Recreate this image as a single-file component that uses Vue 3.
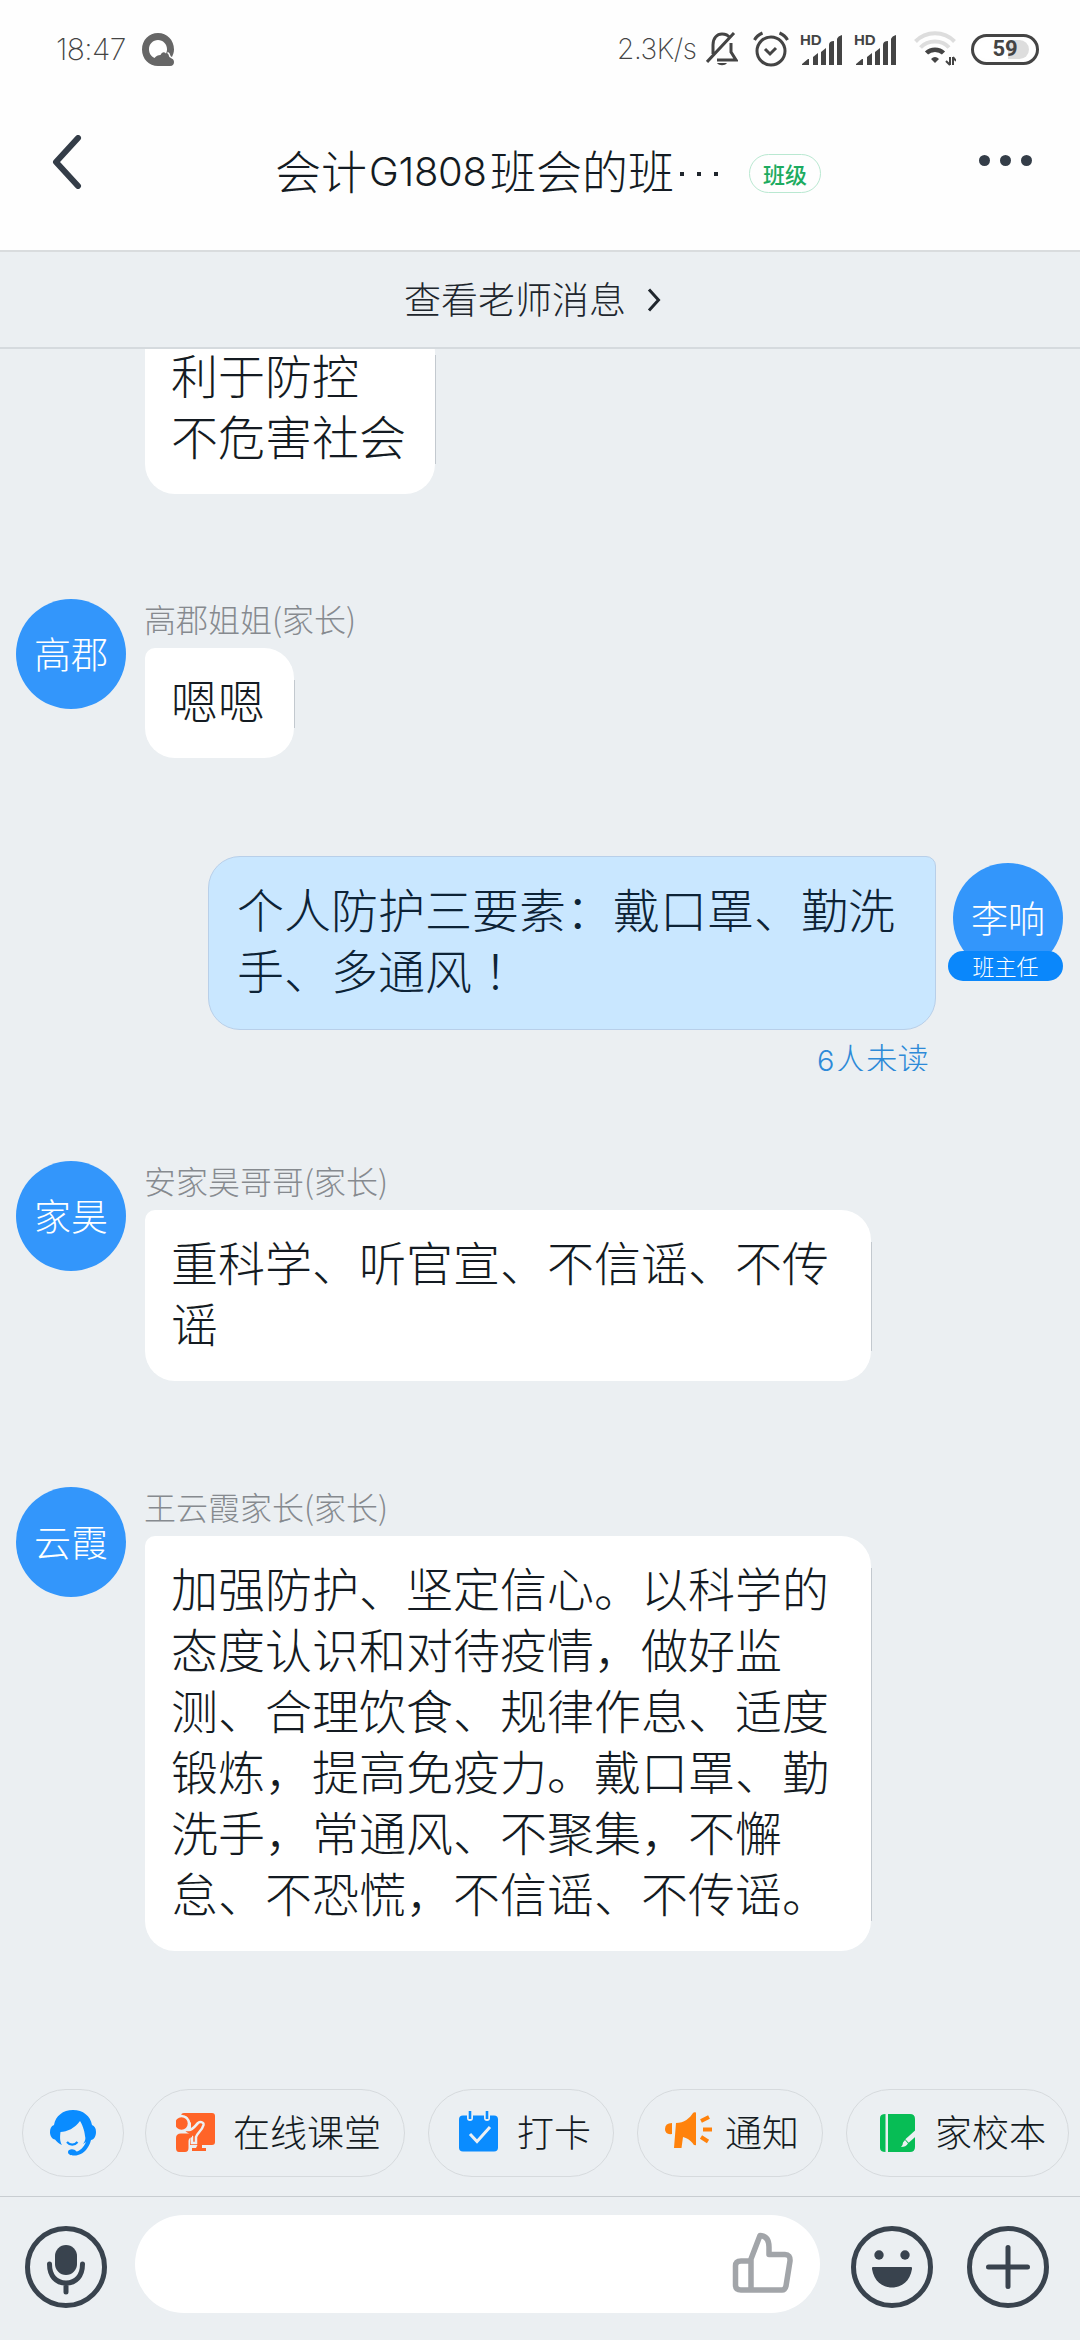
<script setup>
const messages = [
  { id: 1, cls: 'first', lines: ['利于防控', '不危害社会'] },
  { id: 2, cls: 'second', avatar: '高郡', name: '高郡姐姐(家长)', lines: ['嗯嗯'] },
  { id: 3, mine: true },
  { id: 4, cls: 'fourth', wide: true, avatar: '家昊', name: '安家昊哥哥(家长)', lines: ['重科学、听官宣、不信谣、不传', '谣'] },
  {
    id: 5,
    cls: 'fifth',
    wide: true,
    avatar: '云霞',
    name: '王云霞家长(家长)',
    lines: [
      '加强防护、坚定信心。以科学的',
      '态度认识和对待疫情，做好监',
      '测、合理饮食、规律作息、适度',
      '锻炼，提高免疫力。戴口罩、勤',
      '洗手，常通风、不聚集，不懈',
      '怠、不恐慌，不信谣、不传谣。',
    ],
  },
]
</script>

<template>
  <div class="screen">
    <div class="status">
      <span class="clock">18:47</span>
      <svg class="q" width="32" height="33" viewBox="0 0 32 33">
        <path fill="#666" fill-rule="evenodd" d="M16 0C7 0 0 7 0 16.500C0 26 7 33 16 33H28C31 33 32 31 32 29C32 27 31 26 29.500 25C31 22 32 19.500 32 16.500C32 7 25 0 16 0ZM16 7C21 7 25 11 25 16C25 18 24.500 19.500 24 20.500C22 18.500 20 19 18.500 22C16 22 14 23 12.500 25C9 23.500 7 20 7 16C7 11 11 7 16 7Z" />
        <path d="M25.500 19.500C27 20 27.500 21.500 28 23.500L31 25.500" fill="none" stroke="#fff" stroke-width="1.500" />
      </svg>
      <span class="speed">2.3K/s</span>
      <svg class="bell" width="32" height="34" viewBox="0 0 32 34" fill="none" stroke="#444" stroke-width="3">
        <path d="M7 22V13C7 6 11 2 16 2C19 2 22 3 23.500 5.500M25 11V20L30 28H11M1 30L28 1" />
        <path d="M11 31H21C19 34 13 34 11 31Z" fill="#444" stroke="none" />
      </svg>
      <svg class="alarm" width="36" height="36" viewBox="0 0 36 36" fill="none" stroke="#444" stroke-width="3">
        <circle cx="18" cy="20" r="14" />
        <path d="M12 18L17 23L23 17M1.500 9C3 6 6 3.500 9.500 2M34.500 9C33 6 30 3.500 26.500 2" />
      </svg>
      <div v-for="n in 2" :key="n" class="signal">
        <span class="hd">HD</span>
        <svg width="41" height="31" viewBox="0 0 41 31" fill="#444">
          <path d="M0 30V29L6 24H7V30ZM11 30V22L16 18V30ZM19 30V17L24 13V30ZM27 30V10Q27 6 32 6V30ZM35 30V4Q36 1 40 0V30Z" />
        </svg>
      </div>
      <svg class="wifi" width="42" height="36" viewBox="0 0 42 36" fill="none">
        <path d="M1.500 10.500C12 -.5 30 -.5 40.500 10.500" stroke="#ddd" stroke-width="4" />
        <path d="M6.500 16.500C14 8.500 28 8.500 35 16.500" stroke="#ddd" stroke-width="4" />
        <path d="M12.500 22C17 17.500 25 17.500 29.500 22" stroke="#444" stroke-width="4.500" />
        <path d="M17 28Q21 24 25 28L21 32Z" fill="#444" />
        <path d="M36 26V34M32 30L36 34M39 34V26M39 26L42 30" stroke="#444" stroke-width="2" />
      </svg>
      <div class="battery"><i></i><span>59</span></div>
    </div>

    <header class="header">
      <svg class="back" width="30" height="54" viewBox="0 0 30 54" fill="none" stroke="#343d48" stroke-width="6" stroke-linecap="round" stroke-linejoin="round">
        <path d="M26 3L4 27L26 51" />
      </svg>
      <h1 class="title">会计<span class="latin">G1808</span>班会的班<span class="dots"><i></i><i></i><i></i></span></h1>
      <span class="tag">班级</span>
      <div class="more"><i></i><i></i><i></i></div>
    </header>

    <div class="teacher">
      <span>查看老师消息</span>
      <svg width="14" height="24" viewBox="0 0 14 24" fill="none" stroke="#20262d" stroke-width="3"><path d="M2 1.500L11.500 12L2 22.500" /></svg>
    </div>

    <main class="chat">
      <template v-for="m in messages" :key="m.id">
        <div v-if="m.mine" class="mine">
          <div class="mine-col">
            <div class="bubble blue">
              <div>个人防护三要素：戴口罩、勤洗</div>
              <div>手、多通风<span class="mark">！</span></div>
            </div>
            <div class="unread"><span>6</span>人未读</div>
          </div>
          <div class="owner">
            <div class="avatar">李响</div>
            <div class="role">班主任</div>
          </div>
        </div>
        <div v-else class="row" :class="m.cls">
          <div v-if="m.avatar" class="avatar">{{ m.avatar }}</div>
          <div class="col">
            <div v-if="m.name" class="name">{{ m.name }}</div>
            <div class="bubble" :class="{ wide: m.wide }">
              <div v-for="line in m.lines" :key="line">{{ line }}</div>
            </div>
          </div>
        </div>
      </template>
    </main>

    <div class="chips">
      <div class="chip service">
        <svg width="46" height="46" viewBox="0 0 46 46">
          <path fill="#0a8cff" d="M23 0C13 0 5.500 6 4 15C1 16 0 19 0 22C0 26 2 29 5 29.500C7 32 9 34 12 35C9.500 31 10 26 10.500 22C17 22 25 18 30 11C32 14 34.500 20 35 26C36 29 35 31 33 34L36 32C34 37 30 41 26.500 41.500C24 38 18 39 18 42C18 46 25 46 28 45C34 43.500 39 38 41 30C44 30 46 26 46 22C46 18 44.500 16 42 15C40.500 6 33 0 23 0Z" />
          <path fill="none" stroke="#0a8cff" stroke-width="2.200" d="M17 32C20 35.500 24.500 35.500 27.500 32" />
        </svg>
      </div>
      <div class="chip c1">
        <svg width="40" height="40" viewBox="0 0 40 40">
          <rect x="5" y="0" width="34" height="32" rx="3" fill="#ff6428" />
          <path d="M0 3H10L15 10V20L14 32H0Z" fill="#ecf0f3" />
          <path d="M5 17H13C17 17 19 13 22 10C23.500 8 28 9 27.500 12C26 18 21 20 20 24V30H16V24Z" fill="#ff6428" stroke="#ecf0f3" stroke-width="2.500" />
          <circle cx="5.500" cy="10.500" r="7.500" fill="#ff6428" stroke="#ecf0f3" stroke-width="2.500" />
          <path d="M5 20.500H16V24Q12.500 25 12.500 28V35Q12.500 39 9 39H3Q0 39 0 35V25Q0 20.500 5 20.500Z" fill="#ff6428" />
          <path d="M22 31H26V35H30V38H16V35H20Z" fill="#ff6428" />
        </svg>
        <span>在线课堂</span>
      </div>
      <div class="chip c2">
        <svg width="40" height="41" viewBox="0 0 40 41">
          <rect x="0" y="4.500" width="39" height="36" rx="4" fill="#0a8cff" />
          <path d="M11 3V7M28 3V7" stroke="#ecf0f3" stroke-width="6" stroke-linecap="round" />
          <path d="M11 0V8M28 0V8" stroke="#0a8cff" stroke-width="2.600" />
          <path d="M11 23L18 30.500L31 16" fill="none" stroke="#ecf0f3" stroke-width="3" />
        </svg>
        <span>打卡</span>
      </div>
      <div class="chip c3">
        <svg width="48" height="38" viewBox="0 0 48 38" fill="#ff820c">
          <path d="M7 11Q0 11 0 17Q0 23 7 22Z" />
          <path d="M11 11C19 11 25 6 28 1Q29 0 31 0.500V33Q29 34 27.500 31C25 28 22 26 18 25L16.500 36H9Z" />
          <path d="M36 9L44 5M38 17.500H47M36 25L43 29.500" stroke="#ff820c" stroke-width="4" />
        </svg>
        <span>通知</span>
      </div>
      <div class="chip c4">
        <svg width="36" height="40" viewBox="0 0 36 40">
          <path d="M5.500 1V39Q0 39 0 35V5Q0 1 5.500 1ZM8 1H30Q35 1 35 6V34Q35 39 30 39H8Z" fill="#07bd55" />
          <path d="M37 19L27 28" stroke="#ecf0f3" stroke-width="5" />
          <path d="M25 27L28 30.500Q26 34 21 34Q23 32 23 29.500Z" fill="#ecf0f3" />
        </svg>
        <span>家校本</span>
      </div>
    </div>

    <footer class="composer">
      <svg width="82" height="82" viewBox="0 0 82 82" fill="none" stroke="#39434e" stroke-width="5" stroke-linecap="round">
        <circle cx="41" cy="41" r="38.500" />
        <rect x="30" y="19" width="22" height="30" rx="11" fill="#39434e" stroke="none" />
        <path d="M24.500 38C24.500 50 31 57 41 57C51 57 57.500 50 57.500 38M41 57V66" />
      </svg>
      <div class="input">
        <svg width="62" height="62" viewBox="0 0 62 62" fill="none" stroke="#a2a5a9" stroke-width="5.500" stroke-linejoin="round">
          <path d="M19 58H50Q53 58 54 54L58 29Q58.500 22.500 53 22.500H37V15Q37 4 28 3.500L19 27V58ZM19 29H9Q3.500 29 3.500 34V53Q3.500 58 9 58H19" />
        </svg>
      </div>
      <svg class="smile" width="82" height="82" viewBox="0 0 82 82" fill="#39434e">
        <circle cx="41" cy="41" r="38.500" fill="none" stroke="#39434e" stroke-width="5" />
        <circle cx="28" cy="29" r="4.700" /><circle cx="54" cy="29" r="4.700" />
        <path d="M22 41H60Q61.500 41 61 43C59 55 51 61.500 41 61.500C31 61.500 23 55 21 43Q20.500 41 22 41Z" />
      </svg>
      <svg class="plus" width="82" height="82" viewBox="0 0 82 82" fill="none" stroke="#39434e" stroke-width="5" stroke-linecap="round">
        <circle cx="41" cy="41" r="38.500" /><path d="M41 21.500V60.500M21.500 41H60.500" />
      </svg>
    </footer>
  </div>
</template>

<style>
body { margin: 0; }
</style>

<style scoped>
* { box-sizing: border-box; }
svg { display: block; flex: none; }
.screen {
  width: 1080px;
  height: 2340px;
  display: flex;
  flex-direction: column;
  background: #ebeff2;
  overflow: hidden;
  font-family: "Noto Sans CJK SC", sans-serif;
  font-weight: 300;
  color: #141b22;
  white-space: nowrap;
}
.status {
  height: 98px;
  flex: none;
  display: flex;
  align-items: center;
  background: #fefefe;
  padding-left: 56px;
  color: #444;
}
.clock { font: 200 30px/98px Inter, sans-serif; letter-spacing: -.6px; width: 86px; }
.q { margin-top: 1px; }
.speed { font: 200 28px/100px Inter, sans-serif; letter-spacing: -.4px; margin-left: 443px; width: 88px; }
.bell { margin-left: 1px; }
.alarm { margin-left: 15px; }
.signal { position: relative; width: 41px; height: 33px; margin-left: 13px; display: flex; align-items: flex-end; }
.hd { position: absolute; left: -2px; top: -1px; font: 700 15px/15px "Liberation Sans", sans-serif; }
.wifi { margin-left: 17px; }
.battery {
  position: relative;
  width: 68px;
  height: 31px;
  margin-left: 15px;
  border: 3px solid #444;
  border-radius: 16px;
  display: flex;
  justify-content: center;
  align-items: center;
  font: 700 22px/24px Roboto, sans-serif;
}
.battery i { position: absolute; left: 3px; top: 3px; bottom: 3px; width: 52px; border-radius: 10px; background: linear-gradient(90deg, #fff 60%, #ddd 60%); }
.battery span { position: relative; }
.header {
  height: 152px;
  flex: none;
  display: flex;
  align-items: flex-start;
  background: #fefefe;
  padding: 0 46px 0 52px;
}
.back { margin-top: 37px; }
.title { display: flex; align-items: center; font-size: 46px; line-height: 70px; font-weight: 300; margin: 32px 0 0 193px; width: 450px; }
.latin { font: 300 40px/70px Inter, sans-serif; letter-spacing: -.3px; width: 120px; margin: 7px 1px 0 2px; }
.dots { display: flex; gap: 13px; margin: 10px 0 0 6px; }
.dots i { width: 4px; height: 4px; background: #20262d; }
.tag {
  width: 72px;
  height: 39px;
  margin: 56px 0 0 24px;
  border: 1px solid #b9e8d1;
  border-radius: 20px;
  font-size: 22px;
  line-height: 36px;
  font-weight: 500;
  color: #1cab60;
  text-align: center;
}
.more { display: flex; gap: 10px; margin: 57px 0 0 auto; padding-right: 2px; }
.more i { width: 11px; height: 11px; border-radius: 50%; background: #343d48; }
.teacher {
  height: 99px;
  flex: none;
  display: flex;
  align-items: center;
  border-top: 2px solid #d9dcde;
  border-bottom: 2px solid #d5dade;
  padding-left: 404px;
  font-size: 37px;
  color: #20262d;
}
.teacher span { margin-top: -3px; }
.teacher svg { margin-left: 21px; }
.chat { flex: 1; min-height: 0; overflow: hidden; display: flex; flex-direction: column; padding-left: 16px; }
.row { display: flex; align-items: flex-start; flex: none; }
.first { margin: -26px 0 0 129px; }
.second { margin-top: 105px; }
.fourth { margin-top: 90px; }
.fifth { margin-top: 106px; }
.avatar {
  width: 110px;
  height: 110px;
  flex: none;
  border-radius: 50%;
  background: #3396fb;
  color: #fff;
  font-size: 37px;
  line-height: 109px;
  text-align: center;
}
.avatar + .col { margin-left: 19px; }
.col { display: flex; flex-direction: column; align-items: flex-start; }
.name { height: 49px; margin-left: -1px; font-size: 32px; line-height: 38px; color: #868a8f; }
.bubble {
  position: relative;
  padding: 20px 29px 29px 26px;
  background: #fff;
  border-radius: 10px 30px 30px 30px;
  font-size: 47px;
  line-height: 61px;
}
.bubble::after { content: ""; position: absolute; right: -1px; top: 32px; bottom: 30px; width: 1px; background: #c3c9cf; }
.wide { width: 726px; }
.mine { display: flex; align-items: flex-start; justify-content: flex-end; flex: none; margin-top: 98px; padding-right: 17px; }
.mine-col { width: 728px; }
.blue {
  height: 174px;
  padding: 20px 28px 30px 28px;
  background: #c9e7ff;
  border: 1px solid #b8cfe9;
  border-radius: 32px 10px 32px 32px;
  color: #0d2336;
}
.blue::after { content: none; }
.mark { font-family: "Noto Sans CJK JP", sans-serif; }
.unread { height: 41px; overflow: hidden; text-align: right; padding-right: 7px; font-size: 31.5px; line-height: 55px; color: #2d8ad8; }
.unread span { font-family: Inter, sans-serif; font-weight: 300; font-size: 29px; }
.owner { width: 115px; margin: 7px 0 0 12px; display: flex; flex-direction: column; align-items: flex-end; }
.role {
  width: 115px;
  height: 30px;
  margin-top: -22px;
  border-radius: 15px;
  background: #0a87fb;
  color: #fff;
  font-size: 22px;
  line-height: 28px;
  text-align: center;
}
.chips { height: 107px; flex: none; display: flex; align-items: flex-start; padding-left: 22px; }
.chip {
  height: 88px;
  flex: none;
  display: flex;
  align-items: center;
  border: 1px solid #d6dadd;
  border-radius: 44px;
  font-size: 37px;
}
.chip span { margin-top: -4px; }
.chip + .chip { margin-left: 23px; }
.service { width: 102px; padding-left: 27px; }
.service + .c1 { margin-left: 21px; width: 260px; padding-left: 30px; }
.c1 svg { margin-right: 17px; }
.c2 { width: 186px; padding-left: 30px; }
.c2 svg { margin: -3px 18px 0 0; }
.c3 { width: 186px; padding-left: 27px; }
.c3 svg { margin: -5px 12px 0 0; }
.c4 { width: 223px; padding-left: 33px; }
.c4 svg { margin-right: 19px; }
.composer { height: 144px; flex: none; display: flex; align-items: flex-start; border-top: 1px solid #c8cdd1; padding: 18px 0 0 25px; }
.composer > svg { margin-top: 11px; }
.input { width: 685px; height: 98px; margin-left: 28px; border-radius: 49px; background: #fff; display: flex; justify-content: flex-end; padding: 17px 26px 0 0; }
.composer > .smile { margin-left: 31px; }
.composer > .plus { margin-left: 34px; }
</style>
